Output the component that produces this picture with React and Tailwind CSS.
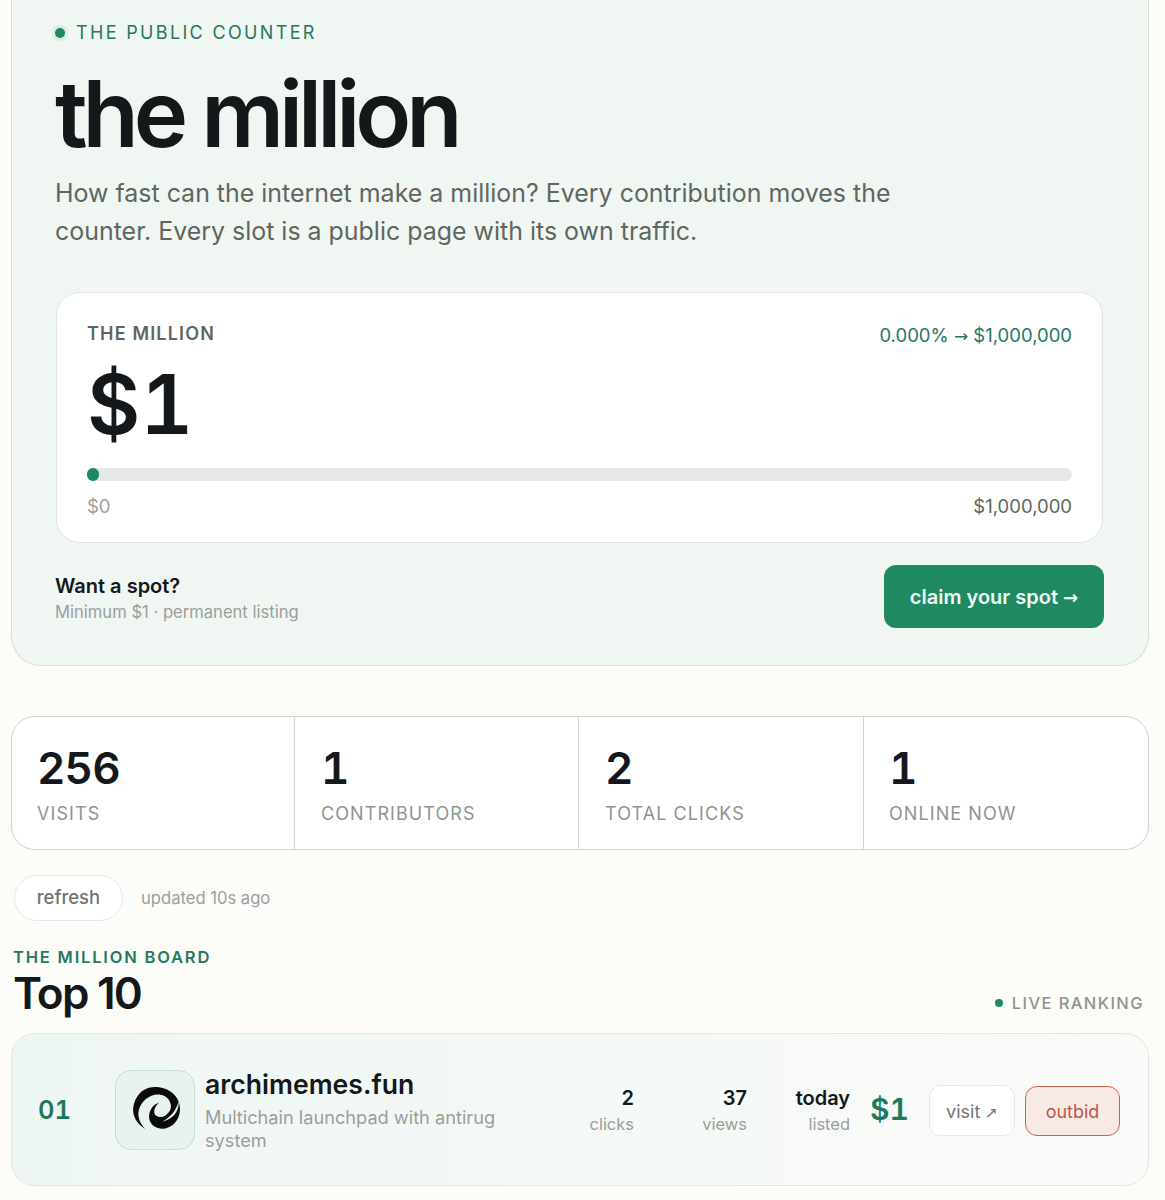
const inter = "font-['Inter','Liberation_Sans',sans-serif]";

function Stat({ value, label, className }) {
  return (
    <div className={`pt-[24px] pb-[23px] ${className}`}>
      <p className="text-[44px] leading-[54px] font-semibold tabular-nums tracking-[-0.02em] text-[#14181a]">{value}</p>
      <p className="mt-[7px] text-[18px] leading-[24px] tracking-[0.06em] text-[#8f9490]">{label}</p>
    </div>
  );
}

function RowStat({ value, label, className }) {
  return (
    <div className={`pt-[1px] text-right ${className}`}>
      <p className="text-[20px] leading-[26px] font-semibold text-[#14181a]">{value}</p>
      <p className="mt-[1px] text-[16.5px] leading-[24px] text-[#9b9f9b]">{label}</p>
    </div>
  );
}

function Swirl() {
  return (
    <svg viewBox="0 0 140 125" className="w-[47px] h-[42px] ml-[2px] mb-[4px]">
      <path
        d="M36 125C8 108 -6 80 3 50C12 18 36 0 66 0C108 0 140 28 140 66C140 102 112 125 85 124C62 123 46 106 48 85C50 66 60 52 78 46C66 57 61 68 64 78C68 91 86 94 100 82C112 72 118 60 108 40C98 24 76 18 55 26C32 36 18 56 16 78C15 95 24 112 36 125Z"
        fill="#0b0b0b"
      />
      <path d="M136 42C139 75 116 97 88 103C112 90 129 70 136 42Z" fill="#e6efea" />
    </svg>
  );
}

export default function App() {
  return (
    <div className={`${inter} h-[1200px] overflow-hidden bg-[#fcfcf8] pl-[11px] pr-[16px]`}>
      {/* hero */}
      <section className="bg-[#f0f6f2] border border-t-0 border-[#dadfd9] rounded-b-[30px] pl-[43px] pr-[44px] pt-[21px] h-[666px]">
        <div className="flex items-center">
          <span className="w-[10px] h-[10px] rounded-full bg-[#1f8a61] ring-[3px] ring-[#dcece4]" />
          <span className="ml-[11px] text-[18px] leading-[24px] tracking-[0.13em] text-[#23795f]">THE PUBLIC COUNTER</span>
        </div>
        <h1 className="mt-[19px] text-[92px] leading-[100px] font-semibold tracking-[-0.055em] text-[#14181a]">the million</h1>
        <p className="mt-[10px] max-w-[860px] text-[24.95px] leading-[38px] text-[#5f6661]">
          How fast can the internet make a million? Every contribution moves the counter. Every slot is a public page with its own traffic.
        </p>

        {/* counter card */}
        <div className="mt-[42px] mx-[1px] h-[251px] bg-white border border-[#e3e6e2] rounded-[24px] px-[30px] pt-[29px]">
          <div className="flex justify-between items-start">
            <span className="text-[18px] leading-[24px] font-semibold tracking-[0.065em] text-[#5f6661]">THE MILLION</span>
            <span className="pt-[1px] text-[18.5px] leading-[24px] text-[#23795f]">
              0.000% <span className="font-['DejaVu_Sans'] text-[17px]">→</span> $1,000,000
            </span>
          </div>
          <p className="mt-[11px] text-[82px] leading-[92px] font-semibold tabular-nums text-[#14181a]">$1</p>
          <div className="mt-[17px] h-[13px] rounded-full bg-[#e6e8e5]">
            <div className="w-[12px] h-[13px] rounded-full bg-[#1f8a61]" />
          </div>
          <div className="mt-[12px] flex justify-between text-[18.5px] leading-[26px]">
            <span className="text-[#9b9f9b]">$0</span>
            <span className="text-[#5f6661]">$1,000,000</span>
          </div>
        </div>

        <div className="mt-[22px] flex justify-between items-center">
          <div className="pt-[2px]">
            <p className="text-[20px] leading-[28px] font-semibold text-[#14181a]">Want a spot?</p>
            <p className="text-[16.6px] leading-[24px] text-[#9b9f9b]">Minimum $1 · permanent listing</p>
          </div>
          <button className="w-[220px] h-[63px] rounded-[12px] bg-[#1f8a61] text-[20px] font-semibold text-[#f1fbf6]">
            claim your spot <span className="font-['DejaVu_Sans'] text-[18px]">→</span>
          </button>
        </div>
      </section>

      {/* stats */}
      <div className="mt-[50px] flex bg-white border-[1.5px] border-[#cfd2cd] rounded-[24px] overflow-hidden">
        <Stat value="256" label="VISITS" className="w-[283px] pl-[25px] border-r border-[#d5d7d2]" />
        <Stat value="1" label="CONTRIBUTORS" className="w-[284px] pl-[26px] border-r border-[#d5d7d2]" />
        <Stat value="2" label="TOTAL CLICKS" className="w-[285px] pl-[26px] border-r border-[#d5d7d2]" />
        <Stat value="1" label="ONLINE NOW" className="flex-1 pl-[25px]" />
      </div>

      <div className="mt-[25px] ml-[3px] flex items-center gap-[18px]">
        <button className="w-[109px] h-[46px] rounded-full bg-white border-[1.5px] border-[#e6e8e5] text-[18.5px] font-medium text-[#6f7571]">refresh</button>
        <span className="text-[16.6px] text-[#9b9f9b]">updated 10s ago</span>
      </div>

      {/* board */}
      <div className="mt-[24px] px-[2px] flex justify-between items-end">
        <div>
          <p className="text-[16.5px] leading-[24px] font-semibold tracking-[0.11em] text-[#23795f]">THE MILLION BOARD</p>
          <h2 className="text-[44px] leading-[48px] font-semibold tracking-[-0.04em] text-[#14181a]">Top 10</h2>
        </div>
        <div className="flex items-center gap-[9px] pb-[2px] pr-[3px]">
          <span className="w-[8px] h-[8px] rounded-full bg-[#1f8a61]" />
          <span className="text-[16.5px] leading-[24px] font-medium tracking-[0.085em] text-[#8f9490]">LIVE RANKING</span>
        </div>
      </div>

      <div className="mt-[16px] h-[153px] flex items-center bg-gradient-to-r from-[#eef6f3] to-[#fafbf9] border border-[#e3e6e2] rounded-[24px] pl-[26px] pr-[28px]">
        <span className="w-[77px] pt-[2px] text-[25.5px] font-semibold tabular-nums text-[#1a7a5a]">01</span>
        <div className="w-[80px] h-[80px] shrink-0 flex items-center justify-center rounded-[16px] bg-[#e9f3ee] border border-[#c5dfd2]">
          <Swirl />
        </div>
        <div className="ml-[10px] w-[310px]">
          <p className="text-[26.6px] leading-[34px] font-semibold text-[#14181a]">archimemes.fun</p>
          <p className="mt-[5px] text-[18.2px] leading-[23px] text-[#9b9f9b]">Multichain launchpad with antirug system</p>
        </div>
        <div className="flex-1 flex items-center justify-end">
          <RowStat value="2" label="clicks" className="w-[60px]" />
          <RowStat value="37" label="views" className="ml-[53px] w-[60px]" />
          <RowStat value="today" label="listed" className="ml-[43px] w-[60px]" />
          <span className="ml-[20px] text-[30px] font-semibold tabular-nums text-[#1a7a5a]">$1</span>
          <button className="ml-[20px] mt-[2px] pt-[2px] w-[86px] h-[51px] rounded-[12px] bg-white border-[1.5px] border-[#e6e8e5] text-[18px] text-[#6f7571]">
            visit <span className="font-['DejaVu_Sans'] text-[15px]">↗</span>
          </button>
          <button className="ml-[10px] mt-[2px] pt-[2px] w-[95px] h-[50px] rounded-[12px] bg-[#f6e9e6] border-[1.5px] border-[#cf5f50] text-[18px] text-[#c0564a]">outbid</button>
        </div>
      </div>
    </div>
  );
}
